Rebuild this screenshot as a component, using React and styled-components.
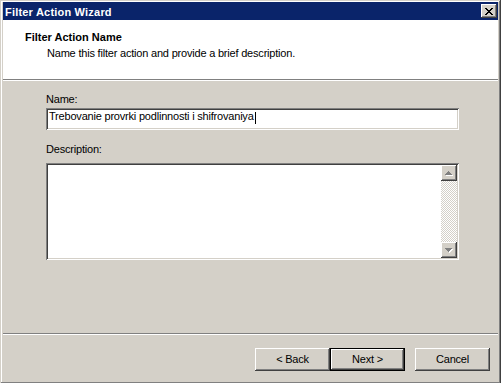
import React from 'react';
import styled, { createGlobalStyle } from 'styled-components';

const GlobalStyle = createGlobalStyle`
  html, body {
    margin: 0;
    padding: 0;
    background: #d4d0c8;
  }
  body {
    font-family: "Liberation Sans", Arial, sans-serif;
    font-size: 11px;
    line-height: 13px;
    letter-spacing: -0.2px;
    color: #000;
    overflow: hidden;
  }
`;

const raised = `
  box-shadow: inset -1px -1px #404040, inset 1px 1px #fff,
    inset -2px -2px #808080, inset 2px 2px #d4d0c8;
`;

const sunken = `
  box-shadow: inset 1px 1px #808080, inset -1px -1px #fff,
    inset 2px 2px #404040, inset -2px -2px #d4d0c8;
`;

const Window = styled.div`
  width: 501px;
  height: 384px;
  box-sizing: border-box;
  padding: 2px 3px 3px 3px;
  display: flex;
  flex-direction: column;
  background: #d4d0c8;
  box-shadow: inset -1px -1px #404040, inset 1px 1px #d4d0c8,
    inset -2px -2px #808080, inset 2px 2px #fff;
`;

const TitleBar = styled.div`
  flex: none;
  height: 18px;
  box-sizing: border-box;
  padding: 4px 1px 0 2px;
  display: flex;
  justify-content: space-between;
  align-items: flex-start;
  background: #0a246a;
  color: #fff;
  font-weight: bold;
  letter-spacing: 0.2px;
`;

const CloseButton = styled.button`
  width: 16px;
  height: 14px;
  margin-top: -2px;
  padding: 0;
  border: none;
  background: #d4d0c8;
  display: flex;
  align-items: center;
  justify-content: center;
  ${raised}
`;

const Header = styled.div`
  flex: none;
  height: 59px;
  box-sizing: border-box;
  padding: 11px 0 0 22px;
  background: #fff;
`;

const HeaderTitle = styled.div`
  font-weight: bold;
  letter-spacing: 0;
`;

const HeaderText = styled.div`
  margin-top: 3px;
  padding-left: 22px;
`;

const Etched = styled.div`
  flex: none;
  height: 2px;
  box-sizing: border-box;
  border-top: 1px solid #808080;
  border-bottom: 1px solid #fff;
`;

const Body = styled.div`
  flex: 1;
  padding: 12px 0 0 43px;
`;

const Form = styled.div`
  width: 413px;
  display: flex;
  flex-direction: column;
`;

const Label = styled.div`
  margin-top: ${(p) => p.$top || 0}px;
  margin-bottom: ${(p) => p.$bottom || 0}px;
`;

const TextBox = styled.div`
  height: 22px;
  box-sizing: border-box;
  padding: 2px 0 0 3px;
  display: flex;
  align-items: flex-start;
  background: #fff;
  white-space: nowrap;
  ${sunken}
`;

const Caret = styled.span`
  width: 1px;
  height: 12px;
  margin: 2px 0 0 1px;
  background: #000;
`;

const Memo = styled.div`
  height: 97px;
  box-sizing: border-box;
  padding: 2px;
  display: flex;
  justify-content: flex-end;
  background: #fff;
  ${sunken}
`;

const ScrollBar = styled.div`
  width: 16px;
  display: flex;
  flex-direction: column;
`;

const ScrollButton = styled.div`
  flex: none;
  width: 16px;
  height: 16px;
  background: #d4d0c8;
  ${raised}
`;

const Track = styled.div`
  flex: 1;
  background: repeating-conic-gradient(#fff 0 25%, #d4d0c8 0 50%) 0 0 / 2px 2px;
`;

const Footer = styled.div`
  flex: none;
  height: 46px;
  box-sizing: border-box;
  padding: 13px 8px 0 0;
  display: flex;
  justify-content: flex-end;
  align-items: flex-start;
`;

const Button = styled.button`
  width: 75px;
  height: 23px;
  margin-left: ${(p) => p.$gap || 0}px;
  padding: 0;
  border: none;
  background: #d4d0c8;
  font-family: inherit;
  font-size: 11px;
  line-height: 13px;
  letter-spacing: -0.2px;
  color: #000;
  ${(p) =>
    p.$default
      ? `box-shadow: inset 0 0 0 1px #000, inset -2px -2px #404040, inset 2px 2px #fff, inset -3px -3px #808080;`
      : raised}
`;

const CloseGlyph = () => (
  <svg width="8" height="7" viewBox="0 0 8 7" shapeRendering="crispEdges">
    <path
      fill="#000"
      d="M0 0h2v1H0z M6 0h2v1H6z M1 1h2v1H1z M5 1h2v1H5z M2 2h4v1H2z M3 3h2v1H3z M2 4h4v1H2z M1 5h2v1H1z M5 5h2v1H5z M0 6h2v1H0z M6 6h2v1H6z"
    />
  </svg>
);

const upArrow = 'M7 6h1v1H7z M6 7h3v1H6z M5 8h5v1H5z M4 9h7v1H4z';
const downArrow = 'M4 6h7v1H4z M5 7h5v1H5z M6 8h3v1H6z M7 9h1v1H7z';

const Arrow = ({ d }) => (
  <svg width="16" height="16" viewBox="0 0 16 16" shapeRendering="crispEdges">
    <path fill="#fff" d={d} transform="translate(1 1)" />
    <path fill="#808080" d={d} />
  </svg>
);

export default function App() {
  return (
    <>
      <GlobalStyle />
      <Window>
        <TitleBar>
          <span>Filter Action Wizard</span>
          <CloseButton aria-label="Close">
            <CloseGlyph />
          </CloseButton>
        </TitleBar>
        <Header>
          <HeaderTitle>Filter Action Name</HeaderTitle>
          <HeaderText>Name this filter action and provide a brief description.</HeaderText>
        </Header>
        <Etched />
        <Body>
          <Form>
            <Label $bottom={2}>Name:</Label>
            <TextBox>
              Trebovanie provrki podlinnosti i shifrovaniya
              <Caret />
            </TextBox>
            <Label $top={13} $bottom={7}>Description:</Label>
            <Memo>
              <ScrollBar>
                <ScrollButton>
                  <Arrow d={upArrow} />
                </ScrollButton>
                <Track />
                <ScrollButton>
                  <Arrow d={downArrow} />
                </ScrollButton>
              </ScrollBar>
            </Memo>
          </Form>
        </Body>
        <Etched />
        <Footer>
          <Button>&lt; Back</Button>
          <Button $default>Next &gt;</Button>
          <Button $gap={10}>Cancel</Button>
        </Footer>
      </Window>
    </>
  );
}
